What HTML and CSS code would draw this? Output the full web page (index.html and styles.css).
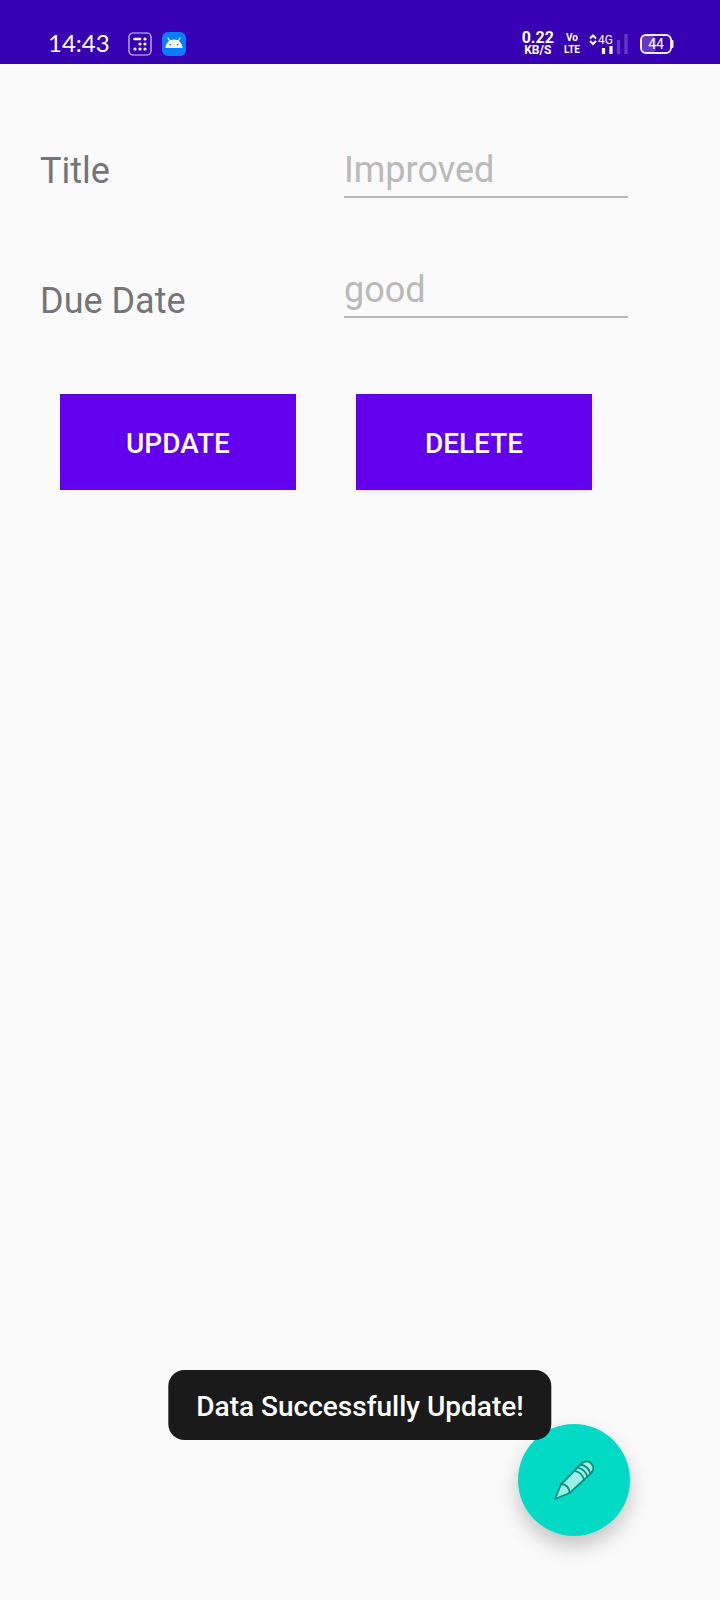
FILE: index.html
```html
<!DOCTYPE html>
<html lang="en">
<head>
<meta charset="utf-8">
<meta name="viewport" content="width=device-width, initial-scale=1">
<title>Update task</title>
<link rel="stylesheet" href="styles.css">
</head>
<body>
<header class="status">
  <time class="clock">14:43</time>
  <svg class="app-icon" width="24" height="24" viewBox="0 0 24 24" aria-hidden="true">
    <rect x="1" y="1" width="22" height="22" rx="4" fill="none" stroke="#d9cdf3" stroke-width="1.2"/>
    <path d="M6.500 7h5.500" stroke="#fff" stroke-width="2.600" stroke-linecap="round"/>
    <g fill="#fff"><circle cx="17" cy="7" r="1.600"/><circle cx="12" cy="12" r="1.600"/><circle cx="17" cy="12" r="1.600"/><circle cx="7" cy="17" r="1.600"/><circle cx="12" cy="17" r="1.600"/><circle cx="17" cy="17" r="1.600"/></g>
  </svg>
  <svg class="app-icon" width="24" height="24" viewBox="0 0 24 24" aria-hidden="true">
    <rect width="24" height="24" rx="6" fill="#0a7cff"/>
    <path d="M3.500 16a8.500 8.500 0 0 1 17 0z" fill="#fff"/>
    <path d="M7.800 9 6 6M16.200 9 18 6" stroke="#fff" stroke-width="1.200" stroke-linecap="round"/>
    <circle cx="8.300" cy="12.600" r=".9" fill="#0a7cff"/><circle cx="15.700" cy="12.600" r=".9" fill="#0a7cff"/>
  </svg>
  <div class="indicators">
    <div class="stack"><span class="speed-value">0.22</span><span class="speed-unit">KB/S</span></div>
    <div class="stack volte"><span>Vo</span><span>LTE</span></div>
    <svg width="40" height="24" viewBox="0 0 40 24" role="img" aria-label="4G signal">
      <path d="M2 6.500 5 3.500l3 3M2 9l3 3 3-3" fill="none" stroke="#fff" stroke-width="2"/>
      <text class="network" x="10" y="12">4G</text>
      <path d="M15.500 16v6M23 14v8" stroke="#fff" stroke-width="3.200"/>
      <path d="M30.500 8v14M38 2v20" stroke="#6538c8" stroke-width="3.200"/>
    </svg>
    <svg class="battery" width="34" height="20" viewBox="0 0 34 20" role="img" aria-label="Battery 44">
      <rect x="2" y="2" width="14" height="16" rx="4" fill="#6538c8"/>
      <rect x="1" y="1" width="30" height="18" rx="5" fill="none" stroke="#f0eafb" stroke-width="2"/>
      <path d="M32.500 7v6" stroke="#f0eafb" stroke-width="2" stroke-linecap="round"/>
      <text class="charge" x="16" y="15" text-anchor="middle">44</text>
    </svg>
  </div>
</header>
<main class="screen">
  <form class="form">
    <div class="fields">
      <label class="label" for="task-title">Title</label>
      <input class="field" id="task-title" type="text" placeholder="Improved">
      <label class="label label-low" for="due-date">Due Date</label>
      <input class="field" id="due-date" type="text" placeholder="good">
    </div>
    <div class="actions">
      <button class="button" type="button">UPDATE</button>
      <button class="button raised" type="button">DELETE</button>
    </div>
  </form>
</main>
<button class="fab" type="button" aria-label="Edit">
  <svg width="40" height="40" viewBox="0 0 40 40" aria-hidden="true">
    <g stroke="#0b8f83" stroke-width="1.800" stroke-linejoin="round" stroke-linecap="round">
      <path d="M1 39 7 24.500 26.500 4.500C29.500 1.500 33.500 0 37 3.300s2.500 7.200 0 10L15.500 33z" fill="#9bf0e6"/>
      <path d="M7 24.500c5-.5 8.500 3 8.500 8.500M20.500 10.800c5 1 8.500 4.500 9.500 9M23.500 7.600c5 1 8.600 4.500 9.800 9M26.500 4.500c5 1 8.600 4.500 9.800 9" fill="none"/>
    </g>
  </svg>
</button>
<div class="toast" role="status">Data Successfully Update!</div>
</body>
</html>
```

FILE: styles.css
```css
* {
  box-sizing: border-box;
}

body {
  margin: 0;
  min-height: 100vh;
  background: #fafafa;
  font-family: Roboto, "Liberation Sans", sans-serif;
}

.status {
  display: flex;
  align-items: center;
  gap: 10px;
  height: 64px;
  padding: 24px 46px 0 48px;
  background: #3700b3;
  color: #fff;
}

.clock {
  margin-right: 8px;
  padding-bottom: 2px;
  font-family: Lato, sans-serif;
  font-size: 24px;
  line-height: 30px;
}

.indicators {
  display: flex;
  align-items: center;
  gap: 10px;
  margin-left: auto;
}

.stack {
  display: flex;
  flex-direction: column;
  align-items: center;
  font-size: 12px;
  font-weight: 700;
  line-height: 13px;
}

.speed-value {
  font-size: 16px;
}

.volte {
  margin-right: -2px;
  font-size: 10px;
  line-height: 12px;
}

.network {
  fill: #fff;
  font-size: 12px;
}

.charge {
  fill: #fff;
  font-size: 14px;
}

.battery {
  margin-left: 2px;
}

.fields {
  display: grid;
  grid-template-columns: 304fr 284fr;
  row-gap: 71px;
  align-items: start;
  padding: 85px 92px 0 40px;
}

.label {
  color: #757575;
  font-size: 36px;
  line-height: 44px;
}

.label-low {
  padding-top: 10px;
}

.field {
  width: 100%;
  min-width: 0;
  padding: 0 0 5px;
  border: 0;
  border-bottom: 2px solid #b7b7b7;
  border-radius: 0;
  outline: 0;
  background: transparent;
  color: #212121;
  font-family: inherit;
  font-size: 36px;
  line-height: 42px;
}

.field::placeholder {
  color: #b9b9b9;
  opacity: 1;
}

.actions {
  display: grid;
  grid-template-columns: 1fr 1fr;
  gap: 60px;
  padding: 71px 128px 0 60px;
}

.button {
  height: 96px;
  padding: 2px 0 0;
  border: 0;
  background: #6200ee;
  color: #fff;
  font-family: inherit;
  font-size: 28px;
  font-weight: 500;
}

.raised {
  box-shadow: 0 1px 4px rgba(0, 0, 0, 0.12);
}

.fab {
  position: fixed;
  right: 90px;
  bottom: 64px;
  display: grid;
  place-items: center;
  width: 112px;
  height: 112px;
  padding: 0;
  border: 0;
  border-radius: 50%;
  background: #03dac5;
  box-shadow: 0 10px 20px rgba(0, 0, 0, 0.22);
}

.toast {
  position: fixed;
  bottom: 160px;
  left: 50%;
  transform: translateX(-50%);
  padding: 20px 28px 16px;
  border-radius: 16px;
  background: #1a1a1a;
  color: #fff;
  font-size: 28px;
  font-weight: 500;
  line-height: 34px;
  white-space: nowrap;
}
```
